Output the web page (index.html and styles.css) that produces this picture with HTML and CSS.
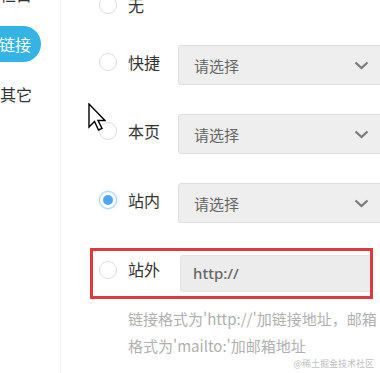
FILE: index.html
```html
<!DOCTYPE html>
<html lang="zh-CN">
<head>
    <meta charset="UTF-8">
    <meta name="viewport" content="width=device-width, initial-scale=1.0">
    <title>链接设置</title>
    <link rel="stylesheet" href="styles.css">
</head>
<body>
    <div class="page">
        <div class="sidebar">
            <div class="nav-item">栏目</div>
            <div class="nav-item active">链接</div>
            <div class="nav-item">其它</div>
        </div>

        <div class="main">
            <div class="row row-none">
                <span class="radio"></span>
                <span class="label">无</span>
            </div>
            <div class="row">
                <span class="radio"></span>
                <span class="label">快捷</span>
                <div class="select">
                    <span>请选择</span>
                    <svg class="chevron" width="15" height="9" viewBox="0 0 15 9"><path d="M1.5 1.5 L7.5 7 L13.5 1.5" fill="none" stroke="#7a7a7a" stroke-width="2.2"/></svg>
                </div>
            </div>
            <div class="row">
                <span class="radio"></span>
                <span class="label">本页</span>
                <div class="select">
                    <span>请选择</span>
                    <svg class="chevron" width="15" height="9" viewBox="0 0 15 9"><path d="M1.5 1.5 L7.5 7 L13.5 1.5" fill="none" stroke="#7a7a7a" stroke-width="2.2"/></svg>
                </div>
            </div>
            <div class="row">
                <span class="radio checked"></span>
                <span class="label">站内</span>
                <div class="select">
                    <span>请选择</span>
                    <svg class="chevron" width="15" height="9" viewBox="0 0 15 9"><path d="M1.5 1.5 L7.5 7 L13.5 1.5" fill="none" stroke="#7a7a7a" stroke-width="2.2"/></svg>
                </div>
            </div>
            <div class="row-ext">
                <span class="radio"></span>
                <span class="label">站外</span>
                <div class="url-input">http://</div>
            </div>
            <p class="hint">链接格式为'http://'加链接地址，邮箱<br>格式为'mailto:'加邮箱地址</p>
        </div>
    </div>

    <svg class="cursor" width="18" height="28" viewBox="0 0 18 28">
        <path d="M1 1 L1 24 L6.5 18.5 L10.5 27 L14 25.5 L10 17.5 L17 17.5 Z" fill="#fff" stroke="#000" stroke-width="1.4" stroke-linejoin="miter"/>
    </svg>
    <div class="watermark">@稀土掘金技术社区</div>
</body>
</html>
```

FILE: styles.css
```css
body {
    margin: 0;
    font-family: "Noto Sans CJK SC", "Noto Sans", sans-serif;
    background: #fff;
    color: #333;
    overflow: hidden;
}

.page {
    display: flex;
    height: 373px;
    overflow: hidden;
}

.sidebar {
    width: 60px;
    flex-shrink: 0;
    border-right: 1px solid #f3f3f3;
}

.nav-item {
    height: 36px;
    line-height: 36px;
    font-size: 16px;
    color: #333;
    margin-bottom: 14px;
    white-space: nowrap;
}

.nav-item:first-child {
    margin-top: -24px;
}

.nav-item.active {
    display: inline-block;
    margin-left: -20px;
    padding: 0 10px 0 19px;
    background-color: #33b4e4;
    color: #fff;
    border-radius: 0 18px 18px 0;
}

.main {
    padding-left: 38px;
    flex: 1;
    min-width: 0;
}

.row {
    display: flex;
    align-items: flex-start;
    height: 40px;
    margin-bottom: 29px;
}

.row-none {
    height: 34px;
    margin-top: -12px;
    margin-bottom: 23px;
}

.radio {
    width: 18px;
    height: 18px;
    box-sizing: border-box;
    border: 1px solid #dcdcdc;
    border-radius: 50%;
    background: #fff;
    margin-top: 8px;
    margin-right: 11px;
    flex-shrink: 0;
    position: relative;
}

.radio.checked {
    border-color: #a8d2f4;
    box-shadow: 0 0 2px rgba(80, 160, 230, 0.4);
}

.radio.checked::after {
    content: "";
    position: absolute;
    left: 3px;
    top: 3px;
    width: 10px;
    height: 10px;
    border-radius: 50%;
    background: #4ea7ee;
}

.label {
    width: 50px;
    flex-shrink: 0;
    line-height: 34px;
    font-size: 16px;
    color: #333;
}

.select {
    width: 207px;
    height: 40px;
    flex-shrink: 0;
    box-sizing: border-box;
    display: flex;
    align-items: center;
    justify-content: space-between;
    padding: 0 15px;
    background: #eeeeee;
    border: 1px solid #dedede;
    border-radius: 3px;
    font-size: 15px;
    color: #666;
}

.row-ext {
    display: flex;
    align-items: flex-start;
    box-sizing: border-box;
    width: 283px;
    margin-left: -9px;
    margin-top: -4px;
    padding: 0 0 4px 6px;
    border: 3px solid #dd3a3d;
}

.row-ext .radio {
    margin-top: 10px;
}

.row-ext .label {
    width: 52px;
    line-height: 36px;
}

.url-input {
    flex: 1;
    height: 35px;
    margin-top: 4px;
    padding-left: 12px;
    line-height: 35px;
    background: #ececec;
    border: 1px solid #e4e4e4;
    border-right: none;
    border-radius: 3px 0 0 3px;
    font-family: "Noto Sans", sans-serif;
    font-size: 15px;
    font-weight: 500;
    color: #666;
}

.hint {
    margin: 6px 0 0 29px;
    font-size: 15px;
    line-height: 27px;
    color: #b0b0b0;
    white-space: nowrap;
}

.cursor {
    position: absolute;
    left: 88px;
    top: 103px;
}

.watermark {
    position: absolute;
    right: 6px;
    bottom: 3px;
    font-size: 9px;
    color: #c0c0c0;
}
```
